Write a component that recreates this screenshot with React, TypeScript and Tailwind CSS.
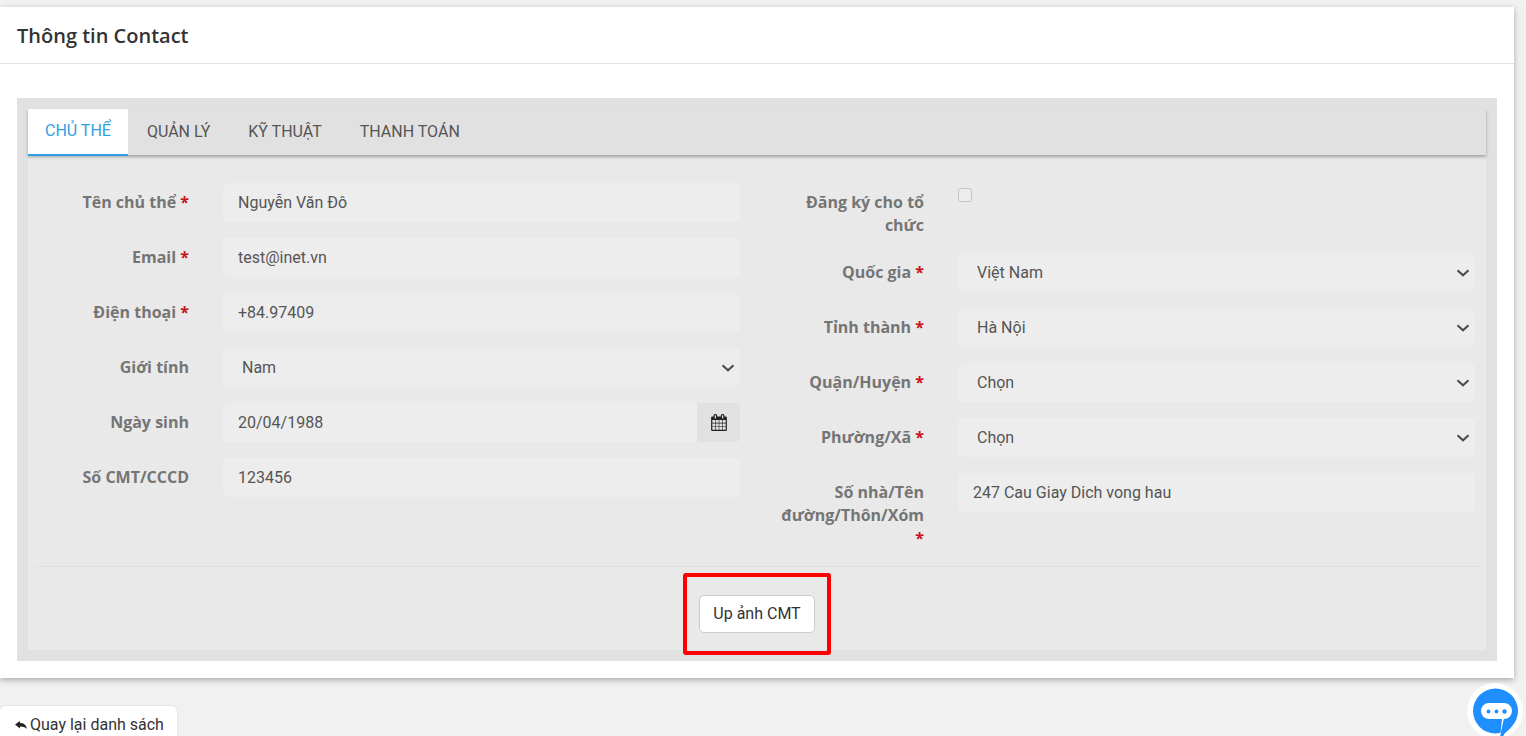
import { useState } from 'react'
import type { ReactNode } from 'react'

const tabs = ['CHỦ THỂ', 'QUẢN LÝ', 'KỸ THUẬT', 'THANH TOÁN']

const fieldClass =
  'block h-[39px] w-full rounded-[5px] bg-[#ededed] px-[15px] text-base text-[#555] outline-none'

interface RowProps {
  id: string
  label: string
  required?: boolean
  children: ReactNode
}

const Row = ({ id, label, required, children }: RowProps) => (
  <div className="grid grid-cols-[150px_minmax(0,1fr)] items-start gap-x-[34px]">
    <label
      htmlFor={id}
      className="pt-2 text-right font-['Open_Sans',sans-serif] text-base leading-[23px] font-bold text-[#757575]"
    >
      {label}
      {required && <span className="text-[#c9141b]"> *</span>}
    </label>
    <div>{children}</div>
  </div>
)

const TextField = ({ id, value }: { id: string; value: string }) => {
  const [text, setText] = useState(value)
  return <input id={id} type="text" value={text} onChange={(e) => setText(e.target.value)} className={fieldClass} />
}

const SelectField = ({ id, options }: { id: string; options: string[] }) => (
  <div className="relative">
    <select
      id={id}
      className="block h-[39px] w-full appearance-none rounded-[5px] bg-[#ededed] px-[19px] text-base text-[#555] outline-none"
    >
      {options.map((o) => (
        <option key={o}>{o}</option>
      ))}
    </select>
    <svg className="pointer-events-none absolute top-4 right-[5px] h-2 w-[14px]" viewBox="0 0 14 8" fill="none">
      <path d="M1.500 1.200L7 6.300l5.500-5.100" stroke="#4a4a4a" strokeWidth="2" />
    </svg>
  </div>
)

const CalendarIcon = () => (
  <svg className="h-[17px] w-4" viewBox="0 0 1664 1792" fill="#222">
    <path d="M128 1664h288v-288h-288v288zm352 0h320v-288h-320v288zm-352-352h288v-320h-288v320zm352 0h320v-320h-320v320zm-352-384h288v-288h-288v288zm736 736h320v-288h-320v288zm-384-736h320v-288h-320v288zm768 736h288v-288h-288v288zm-384-352h320v-320h-320v320zm-352-864v-288q0-13-9.500-22.500t-22.500-9.500h-64q-13 0-22.500 9.500t-9.500 22.500v288q0 13 9.500 22.500t22.500 9.500h64q13 0 22.500-9.500t9.500-22.500zm736 864h288v-320h-288v320zm-384-384h320v-288h-320v288zm384 0h288v-288h-288v288zm32-480v-288q0-13-9.500-22.500t-22.500-9.500h-64q-13 0-22.500 9.500t-9.500 22.500v288q0 13 9.500 22.500t22.500 9.500h64q13 0 22.500-9.500t9.500-22.500zm384-64v1280q0 52-38 90t-90 38h-1408q-52 0-90-38t-38-90v-1280q0-52 38-90t90-38h128v-96q0-66 47-113t113-47h64q66 0 113 47t47 113v96h384v-96q0-66 47-113t113-47h64q66 0 113 47t47 113v96h128q52 0 90 38t38 90z" />
  </svg>
)

const ReplyIcon = () => (
  <svg className="h-[9px] w-3" viewBox="0 0 12 9" fill="#222">
    <path d="M0 3.600L5 0v2C8.700 2 11.200 3.800 12 8 10 6 8 5.400 5 5.400v2z" />
  </svg>
)

const ChatIcon = () => (
  <svg className="h-14 w-14" viewBox="0 0 56 56">
    <circle cx="28" cy="28" r="28" fill="#fff" />
    <circle cx="28.500" cy="28" r="22.500" fill="#1f8fff" />
    <path d="M38 36h8l-3 9.500L33 55z" fill="#1f8fff" />
    <path d="M22 20h15a8 8 0 0 1 0 16L33.200 53 35 36H22a8 8 0 0 1 0-16z" fill="#fff" />
    <path d="M37 36.300h5L36 54h-3z" fill="#1f8fff" />
    <circle cx="21.500" cy="28.500" r="1.900" fill="#1f8fff" />
    <circle cx="29.500" cy="28.500" r="1.900" fill="#1f8fff" />
    <circle cx="37.500" cy="28.500" r="2.200" fill="#1f8fff" />
  </svg>
)

export default function App() {
  const [activeTab, setActiveTab] = useState(0)
  const [organization, setOrganization] = useState(false)

  return (
    <div className="h-screen overflow-hidden bg-[#f1f1f1] pt-[7px] font-[Roboto,sans-serif] text-base text-[#555]">
      <section className="mr-3 bg-white pb-[17px] shadow-[0_2px_6px_rgba(0,0,0,0.3)]">
        <header className="border-b border-[#e1e1e1] px-[17px] pt-[17px] pb-[15px]">
          <h1 className="font-['Open_Sans',sans-serif] text-xl leading-6 font-semibold text-[#333]">
            Thông tin Contact
          </h1>
        </header>

        <div className="mx-[17px] mt-[34px] bg-[#e1e1e1] p-[11px]">
          <div
            className="relative flex h-[46px] items-stretch bg-[#e1e1e1] shadow-[0_2px_3px_rgba(0,0,0,0.3)]"
            role="tablist"
          >
            {tabs.map((tab, i) => (
              <button
                key={tab}
                type="button"
                role="tab"
                aria-selected={i === activeTab}
                onClick={() => setActiveTab(i)}
                className={
                  i === activeTab
                    ? 'h-[47px] border-b-2 border-[#2e9fe0] bg-white px-[17px] pb-[2px] text-[#2e9fe0]'
                    : 'px-[19px] text-[#555]'
                }
              >
                {tab}
              </button>
            ))}
          </div>

          <div className="bg-[#e9e9e9] px-[6px] pt-7">
            <form className="grid grid-cols-2 gap-x-[34px] px-[5px] pb-4" onSubmit={(e) => e.preventDefault()}>
              <div className="flex flex-col gap-4">
                <Row id="name" label="Tên chủ thể" required>
                  <TextField id="name" value="Nguyễn Văn Đô" />
                </Row>
                <Row id="email" label="Email" required>
                  <TextField id="email" value="test@inet.vn" />
                </Row>
                <Row id="phone" label="Điện thoại" required>
                  <TextField id="phone" value="+84.97409" />
                </Row>
                <Row id="gender" label="Giới tính">
                  <SelectField id="gender" options={['Nam', 'Nữ']} />
                </Row>
                <Row id="birthday" label="Ngày sinh">
                  <div className="flex overflow-hidden rounded-[5px]">
                    <input
                      id="birthday"
                      type="text"
                      defaultValue="20/04/1988"
                      className="h-[39px] min-w-0 flex-1 bg-[#ededed] px-[15px] text-base text-[#555] outline-none"
                    />
                    <button
                      type="button"
                      aria-label="Chọn ngày"
                      className="flex w-[43px] items-center justify-center bg-[#e1e1e1]"
                    >
                      <CalendarIcon />
                    </button>
                  </div>
                </Row>
                <Row id="idcard" label="Số CMT/CCCD">
                  <TextField id="idcard" value="123456" />
                </Row>
              </div>

              <div className="flex flex-col gap-4">
                <Row id="organization" label="Đăng ký cho tổ chức">
                  <input
                    id="organization"
                    type="checkbox"
                    checked={organization}
                    onChange={(e) => setOrganization(e.target.checked)}
                    className="mt-[5px] block h-[14px] w-[14px] appearance-none rounded-[3px] border border-[#c4c4c4] bg-[#ededed] checked:bg-[#2e9fe0]"
                  />
                </Row>
                <Row id="country" label="Quốc gia" required>
                  <SelectField id="country" options={['Việt Nam']} />
                </Row>
                <Row id="province" label="Tỉnh thành" required>
                  <SelectField id="province" options={['Hà Nội']} />
                </Row>
                <Row id="district" label="Quận/Huyện" required>
                  <SelectField id="district" options={['Chọn']} />
                </Row>
                <Row id="ward" label="Phường/Xã" required>
                  <SelectField id="ward" options={['Chọn']} />
                </Row>
                <Row id="address" label="Số nhà/Tên đường/Thôn/Xóm" required>
                  <TextField id="address" value="247 Cau Giay Dich vong hau" />
                </Row>
              </div>
            </form>

            <div className="flex justify-center border-t border-[#e0e0e0] pt-7 pb-[17px]">
              <div className="relative">
                <button
                  type="button"
                  className="h-[38px] rounded-[5px] border border-[#ccc] bg-white px-[13px] text-[#333]"
                >
                  Up ảnh CMT
                </button>
                {/* khung đỏ đánh dấu nút tải ảnh */}
                <div className="pointer-events-none absolute -inset-x-4 -inset-y-[22px] rounded-[3px] border-4 border-[#fe0000]" />
              </div>
            </div>
          </div>
        </div>
      </section>

      <a
        href="#"
        className="mt-7 inline-flex h-[38px] items-center gap-[3px] rounded-[5px] bg-white pr-[13px] pl-[15px] text-[#333] shadow-[0_0_2px_rgba(0,0,0,0.15)]"
      >
        <ReplyIcon />
        Quay lại danh sách
      </a>

      <button type="button" aria-label="Chat" className="fixed right-[3px] -bottom-[3px]">
        <ChatIcon />
      </button>
    </div>
  )
}
